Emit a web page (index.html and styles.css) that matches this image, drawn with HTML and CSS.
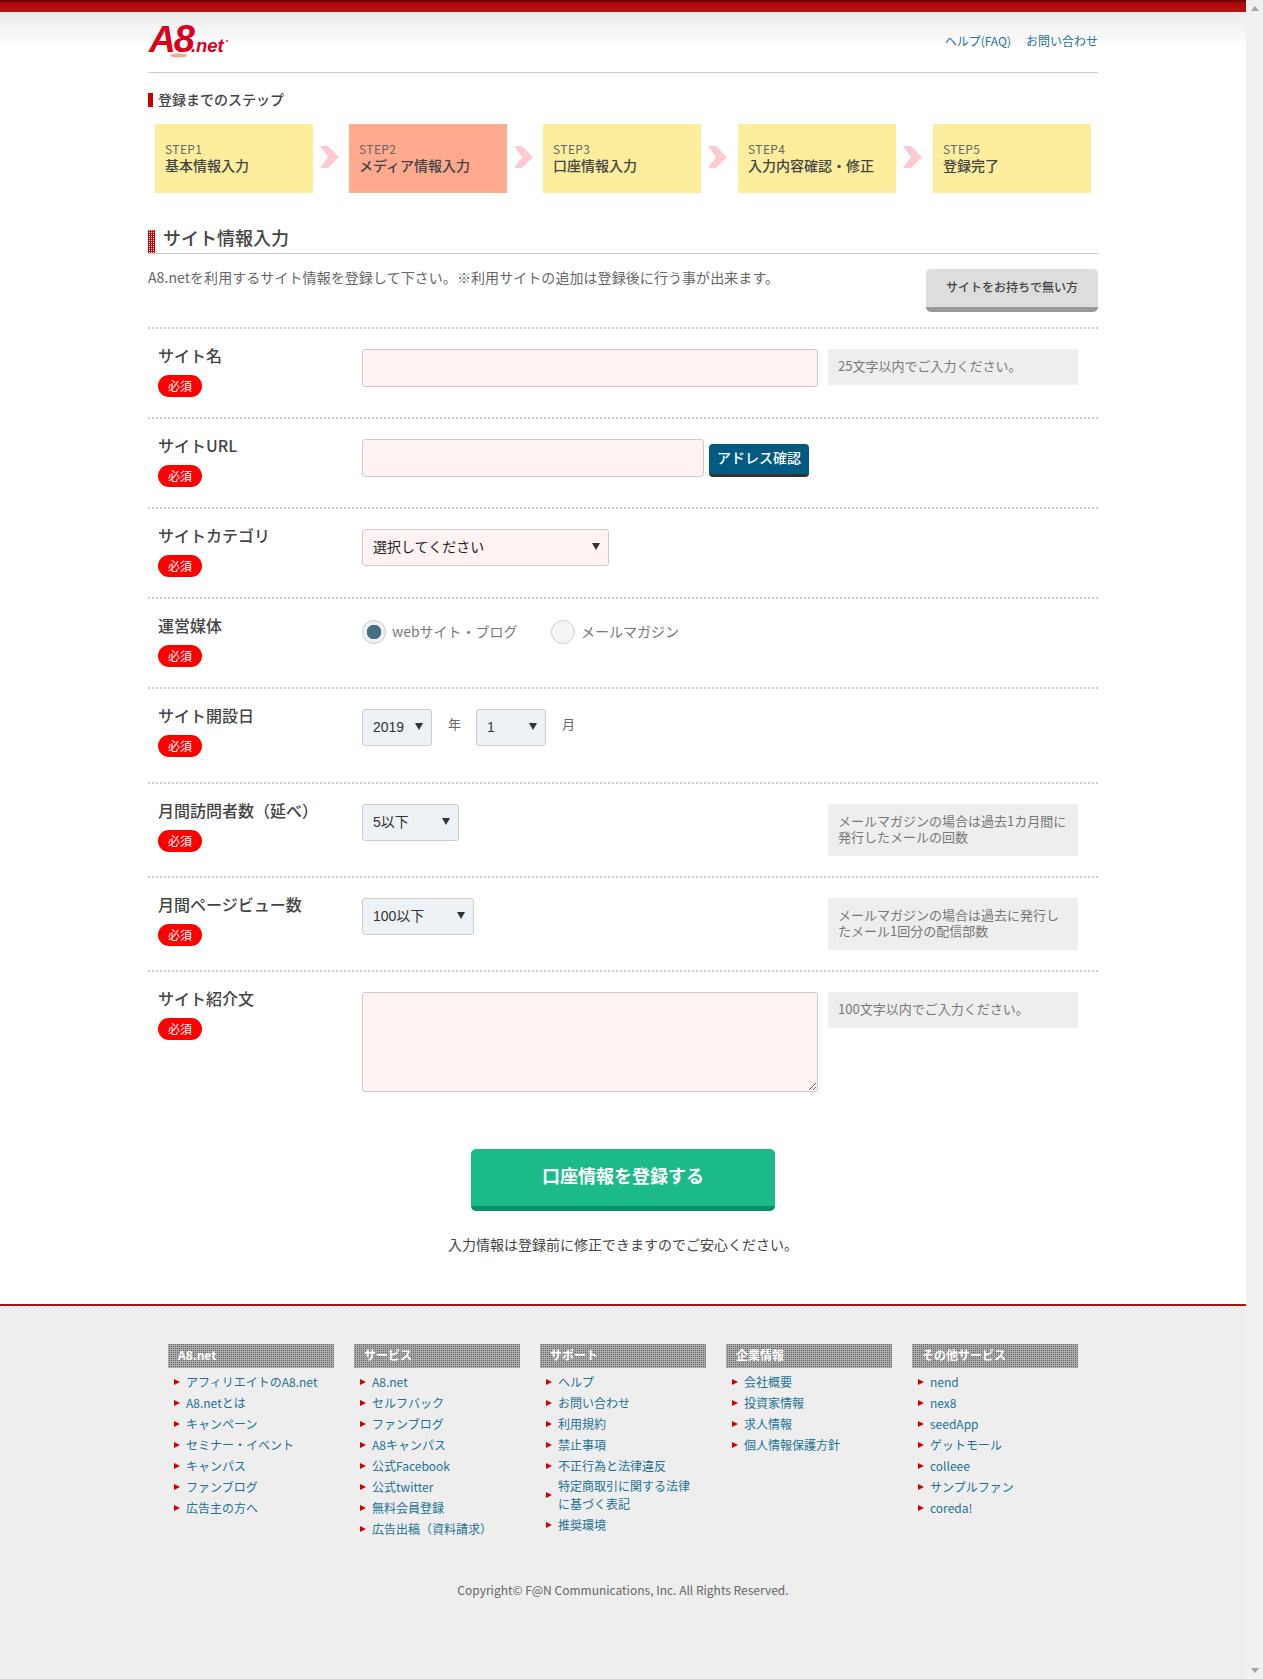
FILE: index.html
```html
<!DOCTYPE html>
<html lang="ja">
<head>
<meta charset="utf-8">
<title>A8.net 登録</title>
<link rel="stylesheet" href="styles.css">
</head>
<body>
<div class="page">
  <div class="main">
    <div class="topbar"></div>
    <header class="header">
      <div class="wrap header-inner">
        <a class="logo" href="#" aria-label="A8.net">
          <svg width="84" height="50" viewBox="0 0 84 50">
            <ellipse cx="30.500" cy="43.500" rx="8.500" ry="2" fill="#f2ab94"/>
            <text x="1" y="40"><tspan class="logo-a">A</tspan><tspan class="logo-8" dx="-2">8</tspan><tspan class="logo-net" dx="-4">.net</tspan></text>
            <circle cx="79" cy="29" r="0.900" fill="#d8001c"/>
          </svg>
        </a>
        <nav class="header-links">
          <a href="#">ヘルプ(FAQ)</a>
          <a href="#">お問い合わせ</a>
        </nav>
      </div>
    </header>

    <main class="wrap">
      <h2 class="steps-title">登録までのステップ</h2>
      <ol class="steps">
        <li class="step"><span class="step-no">STEP1</span><span class="step-name">基本情報入力</span></li>
        <li class="step-arrow"><svg width="19" height="22" viewBox="0 0 19 22"><polygon points="0,0 8,0 19,11 8,22 0,22 8,11" fill="#ffc9d1"/></svg></li>
        <li class="step step-active"><span class="step-no">STEP2</span><span class="step-name">メディア情報入力</span></li>
        <li class="step-arrow"><svg width="19" height="22" viewBox="0 0 19 22"><polygon points="0,0 8,0 19,11 8,22 0,22 8,11" fill="#ffc9d1"/></svg></li>
        <li class="step"><span class="step-no">STEP3</span><span class="step-name">口座情報入力</span></li>
        <li class="step-arrow step-arrow-wide"><svg width="19" height="22" viewBox="0 0 19 22"><polygon points="0,0 8,0 19,11 8,22 0,22 8,11" fill="#ffc9d1"/></svg></li>
        <li class="step"><span class="step-no">STEP4</span><span class="step-name">入力内容確認・修正</span></li>
        <li class="step-arrow step-arrow-wide"><svg width="19" height="22" viewBox="0 0 19 22"><polygon points="0,0 8,0 19,11 8,22 0,22 8,11" fill="#ffc9d1"/></svg></li>
        <li class="step"><span class="step-no">STEP5</span><span class="step-name">登録完了</span></li>
      </ol>

      <h2 class="section-title">サイト情報入力</h2>
      <div class="intro">
        <p class="intro-text">A8.netを利用するサイト情報を登録して下さい。※利用サイトの追加は登録後に行う事が出来ます。</p>
        <a class="btn-gray" href="#">サイトをお持ちで無い方</a>
      </div>

      <form class="form">
        <div class="row">
          <div class="label-col"><div class="label">サイト名</div><span class="badge">必須</span></div>
          <input class="text-input input-wide" type="text">
          <p class="hint">25文字以内でご入力ください。</p>
        </div>
        <div class="row">
          <div class="label-col"><div class="label">サイトURL</div><span class="badge">必須</span></div>
          <input class="text-input input-url" type="text">
          <button class="btn-blue" type="button">アドレス確認</button>
        </div>
        <div class="row">
          <div class="label-col"><div class="label">サイトカテゴリ</div><span class="badge">必須</span></div>
          <span class="sel sel-cat"><select class="pink"><option>選択してください</option></select></span>
        </div>
        <div class="row">
          <div class="label-col"><div class="label">運営媒体</div><span class="badge">必須</span></div>
          <label class="radio radio-web"><input type="radio" name="media" checked>webサイト・ブログ</label>
          <label class="radio"><input type="radio" name="media">メールマガジン</label>
        </div>
        <div class="row row-date">
          <div class="label-col"><div class="label">サイト開設日</div><span class="badge">必須</span></div>
          <span class="sel sel-date"><select><option>2019</option></select></span>
          <span class="unit">年</span>
          <span class="sel sel-date"><select><option>1</option></select></span>
          <span class="unit">月</span>
        </div>
        <div class="row">
          <div class="label-col"><div class="label">月間訪問者数（延べ）</div><span class="badge">必須</span></div>
          <span class="sel sel-visit"><select><option>5以下</option></select></span>
          <p class="hint hint-right">メールマガジンの場合は過去1カ月間に<br>発行したメールの回数</p>
        </div>
        <div class="row">
          <div class="label-col"><div class="label">月間ページビュー数</div><span class="badge">必須</span></div>
          <span class="sel sel-pv"><select><option>100以下</option></select></span>
          <p class="hint hint-right">メールマガジンの場合は過去に発行し<br>たメール1回分の配信部数</p>
        </div>
        <div class="row row-last">
          <div class="label-col"><div class="label">サイト紹介文</div><span class="badge">必須</span></div>
          <textarea class="textarea"></textarea>
          <p class="hint">100文字以内でご入力ください。</p>
        </div>
        <div class="submit-area">
          <button class="btn-submit" type="button">口座情報を登録する</button>
          <p class="submit-note">入力情報は登録前に修正できますのでご安心ください。</p>
        </div>
      </form>
    </main>

    <footer class="footer">
      <div class="wrap">
        <div class="footer-cols">
          <section>
            <h3 class="footer-head">A8.net</h3>
            <ul class="footer-list">
              <li><a href="#">アフィリエイトのA8.net</a></li>
              <li><a href="#">A8.netとは</a></li>
              <li><a href="#">キャンペーン</a></li>
              <li><a href="#">セミナー・イベント</a></li>
              <li><a href="#">キャンパス</a></li>
              <li><a href="#">ファンブログ</a></li>
              <li><a href="#">広告主の方へ</a></li>
            </ul>
          </section>
          <section>
            <h3 class="footer-head">サービス</h3>
            <ul class="footer-list">
              <li><a href="#">A8.net</a></li>
              <li><a href="#">セルフバック</a></li>
              <li><a href="#">ファンブログ</a></li>
              <li><a href="#">A8キャンパス</a></li>
              <li><a href="#">公式Facebook</a></li>
              <li><a href="#">公式twitter</a></li>
              <li><a href="#">無料会員登録</a></li>
              <li><a href="#">広告出稿（資料請求）</a></li>
            </ul>
          </section>
          <section>
            <h3 class="footer-head">サポート</h3>
            <ul class="footer-list">
              <li><a href="#">ヘルプ</a></li>
              <li><a href="#">お問い合わせ</a></li>
              <li><a href="#">利用規約</a></li>
              <li><a href="#">禁止事項</a></li>
              <li><a href="#">不正行為と法律違反</a></li>
              <li class="multi"><a href="#">特定商取引に関する法律<br>に基づく表記</a></li>
              <li><a href="#">推奨環境</a></li>
            </ul>
          </section>
          <section>
            <h3 class="footer-head">企業情報</h3>
            <ul class="footer-list">
              <li><a href="#">会社概要</a></li>
              <li><a href="#">投資家情報</a></li>
              <li><a href="#">求人情報</a></li>
              <li><a href="#">個人情報保護方針</a></li>
            </ul>
          </section>
          <section>
            <h3 class="footer-head">その他サービス</h3>
            <ul class="footer-list">
              <li><a href="#">nend</a></li>
              <li><a href="#">nex8</a></li>
              <li><a href="#">seedApp</a></li>
              <li><a href="#">ゲットモール</a></li>
              <li><a href="#">colleee</a></li>
              <li><a href="#">サンプルファン</a></li>
              <li><a href="#">coreda!</a></li>
            </ul>
          </section>
        </div>
        <p class="copyright">Copyright© F@N Communications, Inc. All Rights Reserved.</p>
      </div>
    </footer>
  </div>
  <div class="scrollbar"><span class="sb-up"></span><span class="sb-down"></span></div>
</div>
</body>
</html>
```

FILE: styles.css
```css
* { box-sizing: border-box; }
html, body { margin: 0; padding: 0; }
body {
  font-family: "Noto Sans CJK JP", "Noto Sans", sans-serif;
  color: #555;
  font-size: 14px;
  background: #fff;
}
a { color: #1f7194; text-decoration: none; }
p, h2, h3, ol, ul { margin: 0; padding: 0; }
ol, ul { list-style: none; }

.page { display: flex; width: 1263px; height: 1679px; overflow: hidden; }
.main { flex: 1; min-width: 0; display: flex; flex-direction: column; }
.wrap { width: 950px; margin: 0 auto; }

.scrollbar {
  width: 17px;
  background: #f1f1f1;
  display: flex;
  flex-direction: column;
  justify-content: space-between;
  align-items: center;
  padding: 6px 0;
}
.sb-up { border: 4px solid transparent; border-top: 0; border-bottom: 5px solid #a3a3a3; width: 0; height: 0; }
.sb-down { border: 4px solid transparent; border-bottom: 0; border-top: 5px solid #a3a3a3; width: 0; height: 0; }

.topbar {
  height: 12px;
  background: linear-gradient(#a80808, #c01212);
  border-top: 2px solid #6e0000;
}
.header { height: 61px; background: linear-gradient(#ebebeb, #fff 36px); }
.header-inner {
  height: 61px;
  border-bottom: 1px solid #ccc;
  display: flex;
  justify-content: space-between;
}
.logo { display: block; height: 50px; }
.logo text { font-family: "Liberation Sans", sans-serif; font-weight: 700; font-style: italic; fill: #d8001c; }
.logo-a { font-size: 37px; }
.logo-8 { font-size: 38px; }
.logo-net { font-size: 18.500px; }
.header-links { display: flex; gap: 15px; padding-top: 20px; font-size: 12px; line-height: 18px; }

.steps-title {
  margin-top: 20px;
  height: 14px;
  line-height: 13px;
  font-size: 14px;
  font-weight: 500;
  color: #444;
  border-left: 5px solid #cc0000;
  padding-left: 5px;
}
.steps { display: flex; margin: 17px 0 0 7px; }
.step {
  flex: none;
  width: 158px;
  height: 69px;
  background: #fdee9e;
  padding-top: 17px;
  display: flex;
  flex-direction: column;
  padding-left: 10px;
}
.step-active { background: #ffaa8e; }
.step-no { font-size: 12px; line-height: 16px; color: #666; letter-spacing: 0.4px; }
.step-name { font-size: 14px; line-height: 17px; color: #444; font-weight: 500; }
.step-arrow { flex: none; width: 36px; padding: 22px 0 0 7px; line-height: 0; }
.step-arrow-wide { width: 37px; }

.section-title {
  margin-top: 37px;
  height: 24px;
  border-bottom: 1px solid #ccc;
  position: relative;
  padding-left: 15px;
  font-size: 18px;
  line-height: 14px;
  font-weight: 500;
  color: #444;
}
.section-title::before {
  content: "";
  position: absolute;
  left: 0;
  top: 0;
  width: 7px;
  height: 23px;
  background-color: #d40000;
  background-image: repeating-conic-gradient(#fff 0 25%, transparent 0 100%);
  background-size: 2px 2px;
}
.intro { display: flex; justify-content: space-between; padding-top: 15px; }
.intro-text { font-size: 14px; line-height: 16px; color: #666; letter-spacing: 0.07px; }
.btn-gray {
  width: 172px;
  height: 43px;
  background: #ddd;
  border-bottom: 5px solid #999;
  border-radius: 5px;
  color: #444;
  font-size: 12px;
  font-weight: 500;
  line-height: 36px;
  text-align: center;
}

.form { margin-top: 15px; }
.row {
  display: flex;
  align-items: flex-start;
  border-top: 2px dotted #ccc;
  padding: 20px 0;
}
.row-date { padding-bottom: 25px; }
.row-last { padding-bottom: 0; }
.label-col { width: 214px; padding-left: 10px; flex: none; }
.label { font-size: 16px; line-height: 12px; margin-bottom: 14px; color: #444; font-weight: 500; }
.badge {
  display: block;
  width: 44px;
  height: 22px;
  line-height: 21px;
  border-radius: 11px;
  background: #f00;
  color: #fff;
  font-size: 12px;
  text-align: center;
}
.text-input, .textarea {
  display: block;
  background: #fff2f2;
  border: 1px solid #ccc;
  border-radius: 3px;
  outline: none;
  padding: 0;
}
.input-wide { width: 456px; height: 38px; }
.input-url { width: 342px; height: 38px; }
.textarea { width: 456px; height: 100px; margin: 0; }
.hint {
  width: 250px;
  margin-left: 10px;
  padding: 9px 10px 11px;
  background: #eee;
  color: #777;
  font-size: 13px;
  line-height: 16px;
}
.hint-right { margin-left: auto; margin-right: 20px; }
.btn-blue {
  width: 100px;
  height: 33px;
  margin: 5px 0 0 5px;
  padding: 0 0 5px;
  border: 0;
  border-bottom: 3px solid #333;
  border-radius: 4px;
  background: #005a82;
  color: #fff;
  font-family: inherit;
  font-size: 14px;
  font-weight: 500;
  line-height: 24px;
}
.sel { position: relative; display: block; flex: none; }
.sel::after {
  content: "";
  position: absolute;
  top: 14px;
  right: 9px;
  border: 4.500px solid transparent;
  border-top: 7px solid #333;
  border-bottom: 0;
}
.sel select {
  display: block;
  width: 100%;
  height: 37px;
  appearance: none;
  -webkit-appearance: none;
  border: 1px solid #ccc;
  border-radius: 3px;
  background: #ecf2f5;
  color: #333;
  font-family: "Liberation Sans", "Noto Sans CJK JP", sans-serif;
  font-size: 14px;
  padding: 0 0 1px 10px;
  outline: none;
}
.sel select.pink { background: #fff2f2; color: #222; padding-bottom: 2px; }
.sel-cat { width: 247px; }
.sel-date { width: 70px; }
.sel-visit { width: 97px; }
.sel-pv { width: 112px; }
.unit { padding: 0 14px 0 16px; line-height: 30px; font-size: 13px; color: #666; width: 44px; }

.radio {
  display: flex;
  align-items: center;
  height: 24px;
  padding-bottom: 2px;
  margin-top: 1px;
  color: #777;
  font-size: 14px;
}
.radio-web { width: 189px; }
.radio input {
  appearance: none;
  -webkit-appearance: none;
  flex: none;
  align-self: flex-start;
  width: 24px;
  height: 24px;
  margin: 0 6px 0 0;
  border: 1px solid #ccc;
  border-radius: 50%;
  background: #f5f5f5;
}
.radio input:checked { background: radial-gradient(circle, #446e83 0 7px, #ecf2f5 7.500px); }

.submit-area { padding-top: 57px; text-align: center; }
.btn-submit {
  display: block;
  width: 304px;
  height: 62px;
  margin: 0 auto;
  padding: 0 0 5px;
  border: 0;
  border-bottom: 5px solid #03906a;
  border-radius: 5px;
  background: #1abb88;
  color: #fff;
  font-family: inherit;
  font-size: 18px;
  font-weight: 700;
}
.submit-note { margin-top: 23px; font-size: 14px; line-height: 20px; color: #444; }

.footer {
  flex: 1;
  margin-top: 50px;
  background: #eee;
  position: relative;
  padding-top: 40px;
}
.footer::before {
  content: "";
  position: absolute;
  top: 0;
  left: 0;
  right: 0;
  height: 2px;
  background-image: repeating-conic-gradient(#900000 0 25%, #c42020 0 50%);
  background-size: 4px 2px;
}
.footer-cols {
  display: grid;
  grid-template-columns: repeat(5, 166px);
  column-gap: 20px;
  padding-left: 20px;
  align-items: start;
}
.footer-head {
  height: 24px;
  padding-left: 10px;
  background-color: #aaa;
  background-image: repeating-conic-gradient(#666 0 25%, transparent 0 100%);
  background-size: 2px 2px;
  color: #fff;
  font-size: 12px;
  font-weight: 700;
  line-height: 22px;
}
.footer-list { margin-top: 3px; }
.footer-list li {
  position: relative;
  padding-left: 18px;
  font-size: 12px;
  line-height: 21px;
}
.footer-list li::before {
  content: "";
  position: absolute;
  left: 6px;
  top: 50%;
  margin-top: -3px;
  border: 3px solid transparent;
  border-left: 6px solid #d40000;
  border-right: 0;
}
.footer-list li.multi { line-height: 18px; padding-top: 1px; padding-bottom: 1px; }
.copyright {
  margin-top: 41px;
  text-align: center;
  font-size: 12px;
  line-height: 20px;
  color: #666;
}
```
